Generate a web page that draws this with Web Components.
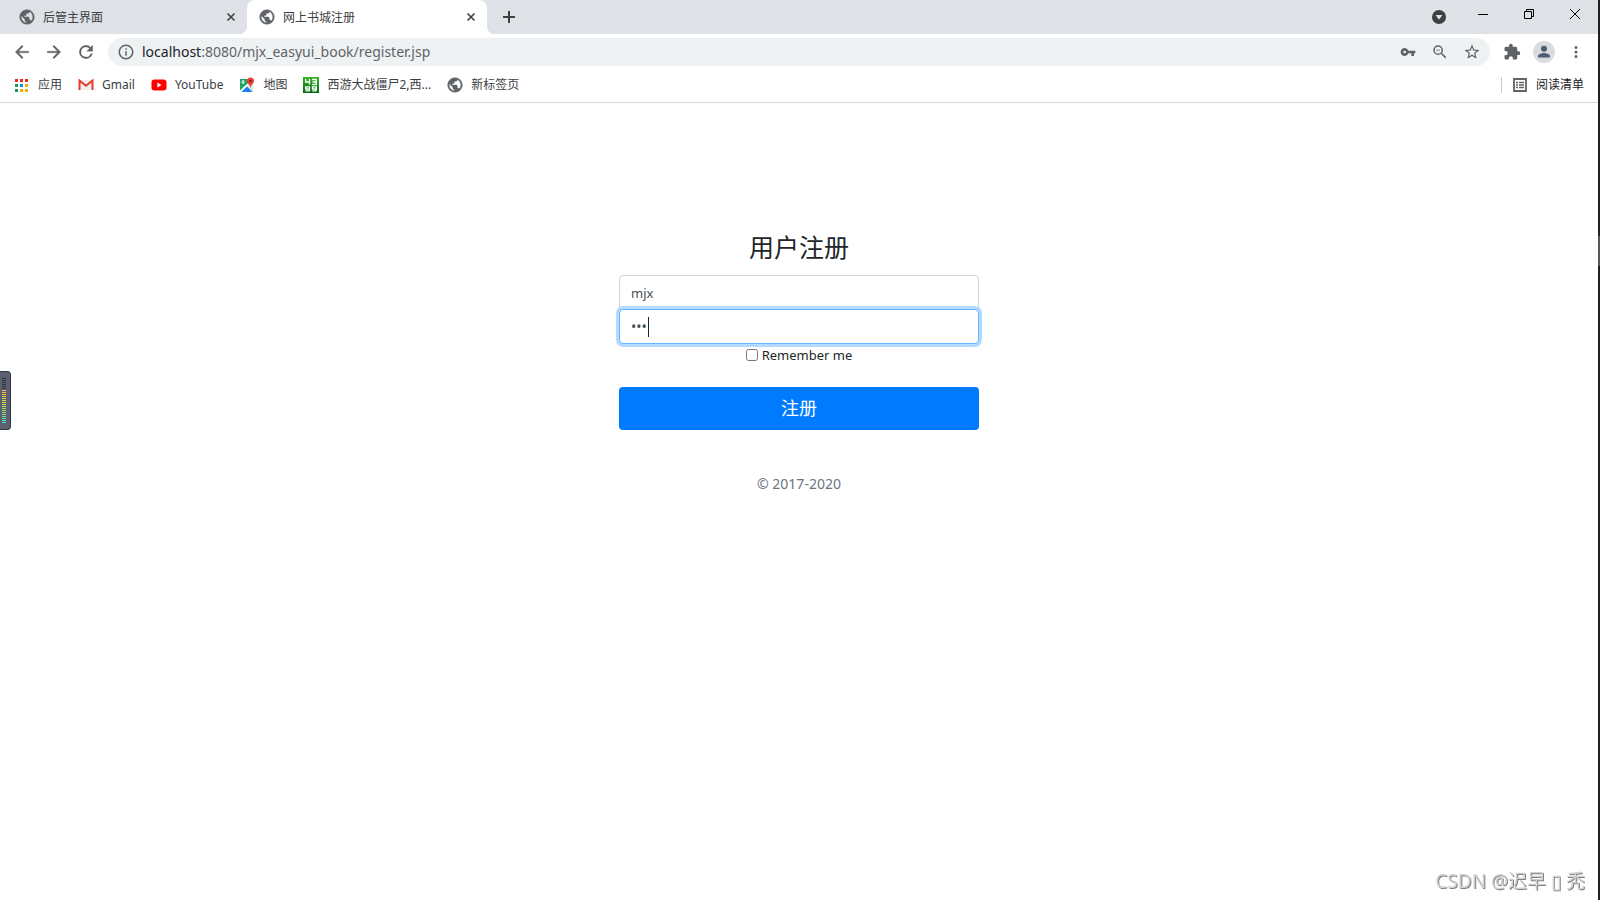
<!DOCTYPE html>
<html lang="zh-CN">
<head>
<meta charset="utf-8">
<title>网上书城注册</title>
<style>
    html, body {
        margin: 0;
        height: 100%;
    }
    body {
        font-family: "Noto Sans", "Noto Sans CJK SC", sans-serif;
        color: #212529;
        background: #fff;
    }
</style>
</head>
<body>
<browser-window>
    <tab-strip slot="tabs">
        <browser-tab>后管主界面</browser-tab>
        <browser-tab active>网上书城注册</browser-tab>
    </tab-strip>
    <address-bar slot="address" host="localhost" path=":8080/mjx_easyui_book/register.jsp"></address-bar>
    <bookmark-bar slot="bookmarks">
        <bookmark-item icon="apps">应用</bookmark-item>
        <bookmark-item icon="gmail">Gmail</bookmark-item>
        <bookmark-item icon="youtube">YouTube</bookmark-item>
        <bookmark-item icon="maps">地图</bookmark-item>
        <bookmark-item icon="game">西游大战僵尸2,西...</bookmark-item>
        <bookmark-item icon="globe">新标签页</bookmark-item>
    </bookmark-bar>
    <register-form heading="用户注册" user="mjx"></register-form>
</browser-window>
<level-meter></level-meter>
<water-mark>CSDN @迟早 ▯ 秃</water-mark>

<script>
const icons = {
    globe: `<svg viewBox="1 1 22 22"><path d="M12 2C6.480 2 2 6.480 2 12s4.480 10 10 10 10-4.480 10-10S17.520 2 12 2zm-1 17.930c-3.950-.490-7-3.850-7-7.930 0-.620.080-1.210.210-1.790L9 15v1c0 1.100.900 2 2 2v1.930zm6.900-2.540c-.260-.810-1-1.390-1.900-1.390h-1v-3c0-.550-.450-1-1-1H8v-2h2c.550 0 1-.450 1-1V7h2c1.100 0 2-.900 2-2v-.410c2.930 1.190 5 4.060 5 7.410 0 2.080-.800 3.970-2.100 5.390z" fill="#5f6368" stroke="#5f6368" stroke-width=".6"/></svg>`,
    close: `<svg viewBox="0 0 16 16"><path d="M4.500 4.500l7 7M11.500 4.500l-7 7" stroke="#3c4043" stroke-width="1.600"/></svg>`,
    plus: `<svg viewBox="0 0 16 16"><path d="M8 2v12M2 8h12" stroke="#3c4043" stroke-width="2"/></svg>`,
    drop: `<svg viewBox="0 0 16 16"><circle cx="8" cy="8" r="7" fill="#3c4043"/><path d="M4.600 6h6.800L8 10.800z" fill="#dee1e6"/></svg>`,
    min: `<svg viewBox="0 0 16 16"><path d="M3 8.500h10" stroke="#000"/></svg>`,
    restore: `<svg viewBox="0 0 16 16"><path d="M3.500 5.500h7v7h-7zM5.500 5V3.500h7v7H11" fill="none" stroke="#000"/></svg>`,
    exit: `<svg viewBox="0 0 16 16"><path d="M3 3l10 10M13 3L3 13" stroke="#000"/></svg>`,
    back: `<svg viewBox="0 0 24 24"><path d="M20 11H7.830l5.590-5.590L12 4l-8 8 8 8 1.410-1.410L7.830 13H20z" fill="#5f6368" stroke="#5f6368" stroke-width=".4"/></svg>`,
    forward: `<svg viewBox="0 0 24 24"><path d="M12 4l-1.410 1.410L16.170 11H4v2h12.170l-5.580 5.590L12 20l8-8z" fill="#5f6368" stroke="#5f6368" stroke-width=".4"/></svg>`,
    reload: `<svg viewBox="0 0 24 24"><path d="M17.650 6.350A7.960 7.960 0 0 0 12 4a8 8 0 1 0 7.730 10h-2.080A6 6 0 1 1 12 6c1.660 0 3.140.690 4.220 1.780L13 11h7V4z" fill="#5f6368" stroke="#5f6368" stroke-width=".4"/></svg>`,
    info: `<svg viewBox="0 0 24 24"><path d="M11 17h2v-6h-2zm1-15a10 10 0 1 0 0 20 10 10 0 0 0 0-20zm0 18a8 8 0 1 1 0-16 8 8 0 0 1 0 16zM11 9h2V7h-2z" fill="#5f6368"/></svg>`,
    key: `<svg viewBox="0 0 24 24"><path d="M12.650 10A5.990 5.990 0 0 0 7 6a6 6 0 1 0 5.650 8H17v4h4v-4h2v-4zM7 14a2 2 0 1 1 0-4 2 2 0 0 1 0 4z" fill="#5f6368"/></svg>`,
    zoom: `<svg viewBox="0 0 24 24"><path d="M15.500 14h-.790l-.280-.270A6.470 6.470 0 0 0 16 9.500 6.500 6.500 0 1 0 9.500 16c1.610 0 3.090-.590 4.230-1.570l.270.280v.790l5 4.990L20.490 19zm-6 0a4.500 4.500 0 1 1 0-9 4.500 4.500 0 0 1 0 9zM7 9h5v1H7z" fill="#5f6368"/></svg>`,
    star: `<svg viewBox="0 0 24 24"><path d="M22 9.240l-7.190-.620L12 2 9.190 8.630 2 9.240l5.460 4.730L5.820 21 12 17.270 18.180 21l-1.630-7.030zM12 15.400l-3.760 2.270 1-4.280-3.320-2.880 4.380-.380L12 6.100l1.710 4.040 4.380.380-3.320 2.880 1 4.280z" fill="#5f6368"/></svg>`,
    puzzle: `<svg viewBox="0 0 24 24"><path d="M20.500 11H19V7a2 2 0 0 0-2-2h-4V3.500a2.500 2.500 0 0 0-5 0V5H4a2 2 0 0 0-2 2v3.800h1.500a2.700 2.700 0 0 1 0 5.400H2V20a2 2 0 0 0 2 2h3.800v-1.500a2.700 2.700 0 0 1 5.400 0V22H17a2 2 0 0 0 2-2v-4h1.500a2.500 2.500 0 0 0 0-5z" fill="#5f6368"/></svg>`,
    person: `<svg viewBox="0 0 24 24"><circle cx="12" cy="12" r="12" fill="#dadce0"/><circle cx="12" cy="8.500" r="3.300" fill="#4d5c72"/><path d="M5.500 18v-1.500c0-2.200 4.300-3.300 6.500-3.300s6.500 1.100 6.500 3.300V18z" fill="#4d5c72"/></svg>`,
    more: `<svg viewBox="0 0 24 24"><path d="M12 8a2 2 0 1 0 0-4 2 2 0 0 0 0 4zm0 2a2 2 0 1 0 0 4 2 2 0 0 0 0-4zm0 6a2 2 0 1 0 0 4 2 2 0 0 0 0-4z" fill="#5f6368"/></svg>`,
    list: `<svg viewBox="0 0 16 16"><path d="M2 2h12v12H2z" fill="none" stroke="#5f6368" stroke-width="1.800"/><path d="M4 5.500h2M4 8h2M4 10.500h2M7 5.500h5M7 8h5M7 10.500h5" stroke="#5f6368" stroke-width="1.300"/></svg>`,
    apps: `<svg viewBox="1 0 16 16"><path d="M2 2h3v3H2zM7 2h3v3H7zM12 2h3v3h-3z" fill="#ea2b1f"/><path d="M2 7h3v3H2zM2 12h3v3H2z" fill="#0f9d58"/><path d="M7 7h3v3H7z" fill="#1a86f0"/><path d="M12 7h3v3h-3zM7 12h3v3H7zM12 12h3v3h-3z" fill="#fbab00"/></svg>`,
    gmail: `<svg viewBox="0 0 16 16"><path d="M1 3h14v10H1z" fill="#f1efee"/><path d="M1.500 13V3.500L8 8.800l6.500-5.300V13" fill="none" stroke="#e13c30" stroke-width="2"/></svg>`,
    youtube: `<svg viewBox="0 0 16 16"><rect x="0.500" y="2.500" width="15" height="11" rx="3" fill="#f00"/><path d="M6.400 5.600v4.800L10.600 8z" fill="#fff"/></svg>`,
    maps: `<svg viewBox="0 0 16 16"><path d="M1 2h10v6l-8 7H1z" fill="#1fa463"/><path d="M8 8l6-2v8.500H9z" fill="#dfe1e3"/><path d="M1 13.500L8.500 6.500l1.500 1.500-7.500 7H1z" fill="#fff"/><path d="M2.500 15L8 9.600l5.500 5.400z" fill="#1a82f0"/><path d="M5.800 5H4.200v1.200h.7A1.400 1.400 0 1 1 5 3.700" fill="none" stroke="#fff"/><path d="M11.500.500A3.600 3.600 0 0 0 8 4.100C8 6.500 11 7.500 11.500 11 12 7.500 15 6.500 15 4.100A3.600 3.600 0 0 0 11.500.500z" fill="#ea3f33"/><circle cx="11.500" cy="4" r="1.200" fill="#8c1510"/></svg>`,
    game: `<svg viewBox="0 0 16 16"><defs><linearGradient id="g" x2="0" y2="1"><stop stop-color="#35b52a"/><stop offset="1" stop-color="#05680f"/></linearGradient></defs><path d="M0 0h16v16H0z" fill="url(#g)"/><path d="M2.700 2v3h4M6.500 2v5.500M9 2.500h4.300v5H9M9.500 5h4M6.500 14v-4.200H2.700V12h3.500M2.500 13.800h4M13.300 14v-4.200H9.500V12H13M9.300 13.800h4" fill="none" stroke="#fff" stroke-width="1.300"/></svg>`
};

class SvgIcon extends HTMLElement {
    constructor() {
        super();
        this.attachShadow({ mode: 'open' });
    }
    connectedCallback() {
        this.shadowRoot.innerHTML = `
            <style>
                :host{
                    display:block;
                    flex:none;
                    width:16px;
                    height:16px;
                }
                svg{
                    display:block;
                    width:100%;
                    height:100%;
                }
            </style>
            ${icons[this.getAttribute("name")]}
        `;
    }
}
window.customElements.define('svg-icon', SvgIcon);

class BrowserWindow extends HTMLElement {
    constructor() {
        super();
        this.attachShadow({ mode: 'open' }).innerHTML = `
            <style>
                :host{
                    display:grid;
                    grid-template-columns:1fr 2px;
                    min-height:100%;
                }
                header{
                    border-bottom:1px solid #d5d7d9;
                }
                .edge{
                    background:linear-gradient(#202124 236px, #55585a 236px 266px, #202124 266px);
                }
            </style>
            <div>
                <header>
                    <slot name="tabs"></slot>
                    <slot name="address"></slot>
                    <slot name="bookmarks"></slot>
                </header>
                <main><slot></slot></main>
            </div>
            <div class="edge"></div>
        `;
    }
}
window.customElements.define('browser-window', BrowserWindow);

class TabStrip extends HTMLElement {
    constructor() {
        super();
        this.attachShadow({ mode: 'open' }).innerHTML = `
            <style>
                :host{
                    display:flex;
                    height:34px;
                    padding-left:7px;
                    background:#dee1e6;
                }
                button{
                    display:flex;
                    align-items:center;
                    justify-content:center;
                    border:0;
                    padding:0;
                    background:none;
                }
                .add{
                    width:44px;
                }
                .controls{
                    display:flex;
                    align-items:center;
                    margin-left:auto;
                }
                .controls button{
                    width:46px;
                    height:28px;
                    align-self:flex-start;
                }
                .controls .search{
                    width:42px;
                    height:34px;
                }
            </style>
            <slot></slot>
            <button class="add" aria-label="新标签页"><svg-icon name="plus"></svg-icon></button>
            <div class="controls">
                <button class="search" aria-label="搜索标签页"><svg-icon name="drop"></svg-icon></button>
                <button aria-label="最小化"><svg-icon name="min"></svg-icon></button>
                <button aria-label="还原"><svg-icon name="restore"></svg-icon></button>
                <button aria-label="关闭"><svg-icon name="exit"></svg-icon></button>
            </div>
        `;
    }
}
window.customElements.define('tab-strip', TabStrip);

class BrowserTab extends HTMLElement {
    constructor() {
        super();
        this.attachShadow({ mode: 'open' }).innerHTML = `
            <style>
                :host{
                    display:flex;
                    box-sizing:border-box;
                    align-items:center;
                    width:240px;
                    padding:0 8px 0 12px;
                    font-size:12px;
                    color:#3c4043;
                }
                :host([active]){
                    position:relative;
                    border-radius:8px 8px 0 0;
                    background:#fff;
                }
                :host([active])::before, :host([active])::after{
                    content:"";
                    position:absolute;
                    bottom:0;
                    width:8px;
                    height:8px;
                }
                :host([active])::before{
                    right:100%;
                    background:radial-gradient(circle at 0 0, #dee1e6 8px, #fff 8px);
                }
                :host([active])::after{
                    left:100%;
                    background:radial-gradient(circle at 100% 0, #dee1e6 8px, #fff 8px);
                }
                .title{
                    flex:1;
                    margin-left:8px;
                    padding-top:2px;
                    line-height:16px;
                }
                button{
                    border:0;
                    padding:0;
                    background:none;
                }
            </style>
            <svg-icon name="globe"></svg-icon>
            <span class="title"><slot></slot></span>
            <button aria-label="关闭标签页"><svg-icon name="close"></svg-icon></button>
        `;
    }
}
window.customElements.define('browser-tab', BrowserTab);

class AddressBar extends HTMLElement {
    constructor() {
        super();
        this.attachShadow({ mode: 'open' });
    }
    connectedCallback() {
        this.shadowRoot.innerHTML = `
            <style>
                :host{
                    display:flex;
                    align-items:center;
                    height:36px;
                    padding:0 6px;
                }
                button{
                    display:flex;
                    align-items:center;
                    justify-content:center;
                    width:32px;
                    height:32px;
                    border:0;
                    padding:0;
                    background:none;
                }
                button svg-icon, .info{
                    width:18px;
                    height:18px;
                }
                .nav svg-icon{
                    width:20px;
                    height:20px;
                }
                .box{
                    display:flex;
                    flex:1;
                    align-items:center;
                    height:28px;
                    margin:0 6px;
                    padding:0 2px 0 9px;
                    border-radius:14px;
                    background:#eff2f3;
                }
                .url{
                    flex:1;
                    margin-left:7px;
                    font-size:14px;
                    line-height:20px;
                    color:#5f6368;
                }
                .host{
                    color:#202124;
                }
                .box svg-icon[name=key]{
                    width:16px;
                    height:16px;
                }
                .user svg-icon{
                    width:22px;
                    height:22px;
                }
            </style>
            <button class="nav" aria-label="后退"><svg-icon name="back"></svg-icon></button>
            <button class="nav" aria-label="前进"><svg-icon name="forward"></svg-icon></button>
            <button class="nav" aria-label="重新加载"><svg-icon name="reload"></svg-icon></button>
            <div class="box">
                <svg-icon class="info" name="info"></svg-icon>
                <div class="url" role="textbox" contenteditable="true" spellcheck="false" aria-label="地址"><span class="host">${this.getAttribute("host")}</span>${this.getAttribute("path")}</div>
                <button aria-label="密码"><svg-icon name="key"></svg-icon></button>
                <button aria-label="缩放"><svg-icon name="zoom"></svg-icon></button>
                <button aria-label="收藏"><svg-icon name="star"></svg-icon></button>
            </div>
            <button aria-label="扩展程序"><svg-icon name="puzzle"></svg-icon></button>
            <button class="user" aria-label="用户"><svg-icon name="person"></svg-icon></button>
            <button aria-label="更多"><svg-icon name="more"></svg-icon></button>
        `;
    }
}
window.customElements.define('address-bar', AddressBar);

class BookmarkBar extends HTMLElement {
    constructor() {
        super();
        this.attachShadow({ mode: 'open' }).innerHTML = `
            <style>
                :host{
                    display:flex;
                    align-items:center;
                    gap:16px;
                    height:30px;
                    padding:0 14px 2px 14px;
                    font-size:12px;
                    color:#3c4043;
                }
                .list{
                    display:flex;
                    align-items:center;
                    gap:8px;
                    margin-left:auto;
                    border:0;
                    border-left:1px solid #c8cacc;
                    padding:0 0 0 10px;
                    background:none;
                    font:inherit;
                    line-height:16px;
                    color:#202124;
                }
            </style>
            <slot></slot>
            <button class="list"><svg-icon name="list"></svg-icon>阅读清单</button>
        `;
    }
}
window.customElements.define('bookmark-bar', BookmarkBar);

class BookmarkItem extends HTMLElement {
    constructor() {
        super();
        this.attachShadow({ mode: 'open' });
    }
    connectedCallback() {
        this.shadowRoot.innerHTML = `
            <style>
                :host{
                    display:block;
                }
                a{
                    display:flex;
                    align-items:center;
                    gap:8px;
                    line-height:16px;
                    color:inherit;
                    text-decoration:none;
                }
            </style>
            <a href="#"><svg-icon name="${this.getAttribute("icon")}"></svg-icon><span><slot></slot></span></a>
        `;
    }
}
window.customElements.define('bookmark-item', BookmarkItem);

class RegisterForm extends HTMLElement {
    constructor() {
        super();
        this.attachShadow({ mode: 'open' });
    }
    connectedCallback() {
        this.shadowRoot.innerHTML = `
            <style>
                :host{
                    display:block;
                    padding:128px 16px 0;
                    text-align:center;
                    font-size:14px;
                    line-height:22px;
                }
                form{
                    max-width:360px;
                    margin:0 auto;
                }
                h1{
                    margin:0 0 12px;
                    font-size:25px;
                    line-height:32px;
                    font-weight:400;
                }
                .field{
                    position:relative;
                }
                .field input{
                    display:block;
                    box-sizing:border-box;
                    width:100%;
                    height:35px;
                    margin:0;
                    border:1px solid #ced4da;
                    border-radius:4px;
                    padding:0 11px;
                    background:#fff;
                    font:inherit;
                    color:#495057;
                    outline:0;
                }
                .field.user input{
                    border-radius:4px 4px 0 0;
                    font-size:13px;
                }
                .pass{
                    margin-top:-1px;
                }
                .field.pass input{
                    border-color:#66b5ff;
                    box-shadow:0 0 0 3px #b3daff;
                    caret-color:transparent;
                }
                .caret{
                    position:absolute;
                    left:29px;
                    top:8px;
                    width:1px;
                    height:20px;
                    background:#212529;
                }
                .remember{
                    display:flex;
                    align-items:center;
                    justify-content:center;
                    gap:4px;
                    margin-bottom:21px;
                    font-size:13px;
                }
                .remember input{
                    width:12px;
                    height:12px;
                    margin:0;
                }
                .submit{
                    display:block;
                    width:100%;
                    height:43px;
                    border:0;
                    border-radius:4px;
                    padding:0 0 2px;
                    background:#007bff;
                    font:inherit;
                    font-size:18px;
                    color:#fff;
                }
                p{
                    margin:43px 0 0;
                    color:#6c757d;
                }
            </style>
            <form>
                <h1>${this.getAttribute("heading")}</h1>
                <div class="field user"><input type="text" aria-label="用户名" value="${this.getAttribute("user")}"></div>
                <div class="field pass"><input type="password" aria-label="密码" value="123"><span class="caret"></span></div>
                <label class="remember"><input type="checkbox">Remember me</label>
                <button class="submit" type="button">注册</button>
                <p>© 2017-2020</p>
            </form>
        `;
    }
}
window.customElements.define('register-form', RegisterForm);

// floating volume meter docked to the left edge
class LevelMeter extends HTMLElement {
    constructor() {
        super();
        this.attachShadow({ mode: 'open' }).innerHTML = `
            <style>
                :host{
                    position:fixed;
                    left:0;
                    top:371px;
                    box-sizing:border-box;
                    width:11px;
                    height:59px;
                    border:1px solid #363945;
                    border-left:0;
                    border-radius:0 4px 4px 0;
                    padding:6px 4px 5px 2px;
                    background:#5b5f70;
                }
                div{
                    height:100%;
                    background:
                        repeating-linear-gradient(transparent 0 1px, #5b5f70 1px 2px),
                        linear-gradient(#30333d 0 12px, #f5b83d 12px, #d3e04e 26px, #7fe08a 36px, #45e0d0);
                }
            </style>
            <div></div>
        `;
    }
}
window.customElements.define('level-meter', LevelMeter);

class WaterMark extends HTMLElement {
    constructor() {
        super();
        this.attachShadow({ mode: 'open' }).innerHTML = `
            <style>
                :host{
                    position:fixed;
                    right:15px;
                    bottom:5px;
                    font-size:19px;
                    line-height:28px;
                    color:#d0d0d0;
                    text-shadow:1px 1px 0 #808080;
                }
            </style>
            <slot></slot>
        `;
    }
}
window.customElements.define('water-mark', WaterMark);
</script>
</body>
</html>
